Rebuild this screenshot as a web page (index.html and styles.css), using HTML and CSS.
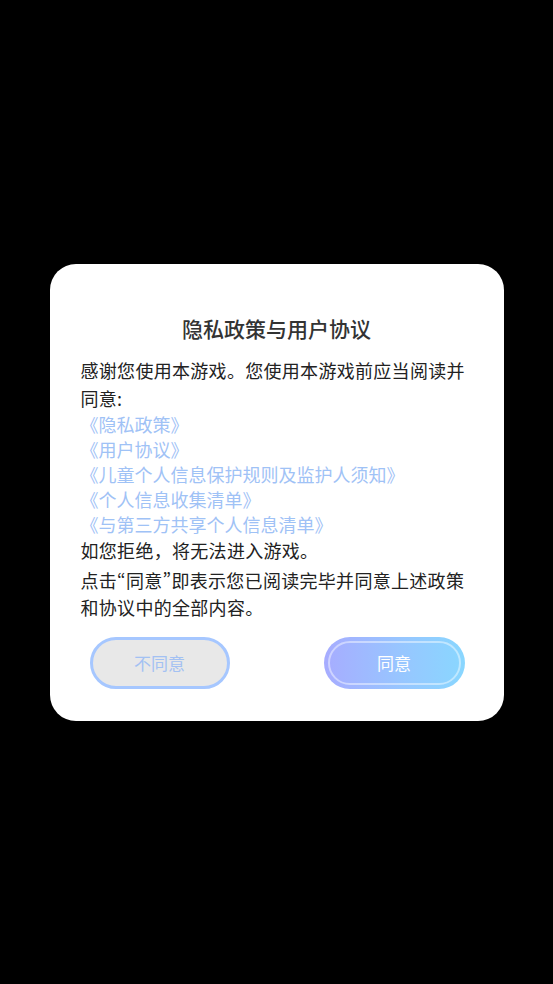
FILE: index.html
```html
<!DOCTYPE html>
<html lang="zh-CN">
<head>
<meta charset="utf-8">
<title>隐私政策与用户协议</title>
<link rel="stylesheet" href="styles.css">
</head>
<body>
<div class="screen">
  <div class="dialog">
    <h1 class="title">隐私政策与用户协议</h1>
    <p class="text">感谢您使用本游戏。您使用本游戏前应当阅读并同意:</p>
    <ul class="links">
      <li>《隐私政策》</li>
      <li>《用户协议》</li>
      <li>《儿童个人信息保护规则及监护人须知》</li>
      <li>《个人信息收集清单》</li>
      <li>《与第三方共享个人信息清单》</li>
    </ul>
    <p class="text refuse">如您拒绝，将无法进入游戏。</p>
    <p class="text note">点击“同意”即表示您已阅读完毕并同意上述政策和协议中的全部内容。</p>
    <div class="actions">
      <button class="btn btn-no">不同意</button>
      <button class="btn btn-yes">同意</button>
    </div>
  </div>
</div>
</body>
</html>
```
FILE: styles.css
```css
html, body {
  margin: 0;
  padding: 0;
  background: #000;
}
.screen {
  width: 553px;
  height: 984px;
  display: flex;
  align-items: center;
  justify-content: center;
  font-family: "Noto Sans CJK SC", "Noto Sans", sans-serif;
}
.dialog {
  width: 454px;
  box-sizing: border-box;
  background: #fff;
  border-radius: 26px;
  padding: 49px 31px 32px 31px;
  display: flex;
  flex-direction: column;
}
.title {
  margin: 0;
  font-size: 21px;
  line-height: 30px;
  font-weight: 500;
  color: #333;
  text-align: center;
}
.text {
  margin: 13px 0 0 0;
  font-size: 18px;
  line-height: 28px;
  letter-spacing: 0.3px;
  color: #222;
}
.links {
  list-style: none;
  margin: 0;
  padding: 0;
  font-size: 18px;
  line-height: 25px;
  color: #9fc2f6;
}
.refuse {
  margin-top: 0;
  line-height: 26px;
}
.note {
  margin-top: 4px;
  line-height: 27px;
  font-feature-settings: "pwid";
}
.actions {
  display: flex;
  justify-content: space-between;
  margin: 16px 8px 0 9px;
}
.btn {
  position: relative;
  width: 140px;
  height: 52px;
  border-radius: 26px;
  font-family: inherit;
  font-size: 17px;
  box-sizing: border-box;
  padding: 0;
  cursor: pointer;
}
.btn-no {
  background: #e8e8e8;
  border: 3px solid #a6c7ff;
  color: #a3c1f3;
}
.btn-yes {
  width: 141px;
  border: none;
  color: #fff;
  background: linear-gradient(90deg, #a7acff 0%, #97c6ff 55%, #89d7ff 100%);
}
.btn-yes::after {
  content: "";
  position: absolute;
  top: 4px;
  left: 4px;
  right: 4px;
  bottom: 4px;
  border: 2px solid rgba(255, 255, 255, 0.45);
  border-radius: 22px;
}
```
